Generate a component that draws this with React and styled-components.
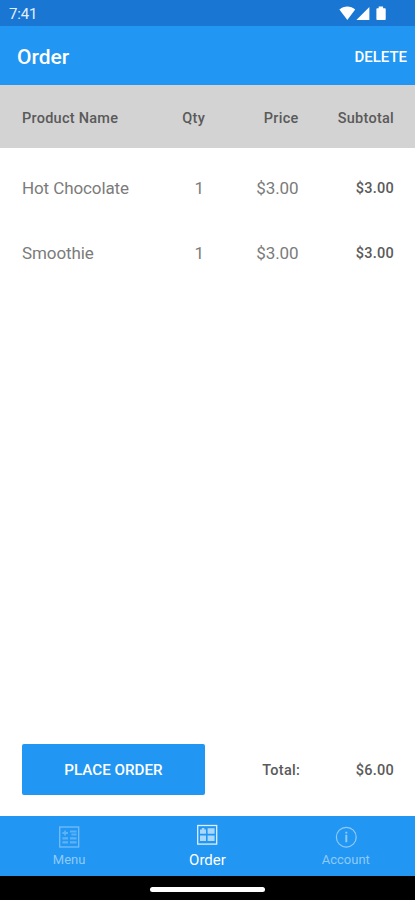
import React from 'react';
import styled, { createGlobalStyle } from 'styled-components';

const items = [
  { id: 1, name: 'Hot Chocolate', qty: 1, price: 3 },
  { id: 2, name: 'Smoothie', qty: 1, price: 3 },
];

const tabs = [
  { name: 'Menu', icon: 'list' },
  { name: 'Order', icon: 'list', active: true },
  { name: 'Account', icon: 'info' },
];

const formatPrice = (number) => `$${number.toFixed(2)}`;

const ListIcon = ({ active }) => (
  <svg width='22' height='22' viewBox='0 0 22 22' fill='none'>
    <rect
      x='1.7'
      y={active ? 1.5 : 1}
      width='19'
      height={active ? 18.6 : 20}
      stroke='currentColor'
      strokeWidth='1.3'
      strokeOpacity={active ? 0.85 : 0.75}
    />
    {active ? (
      <g fill='currentColor' fillOpacity='0.62'>
        <path d='M4 5.4h1.8V4h2.6v1.4H10v4.4H4zM11.6 4.2h7v5.6h-7zM4 11.4h6V17H4zM11.6 11.4h7V17h-7z' />
      </g>
    ) : (
      <g fill='currentColor' fillOpacity='0.55'>
        <path d='M4.4 6h1.8V4.6H8V6h2v2H8v1.4H6.200V8H4.400zM4.400 11.200H10v2.200H4.400zM4.400 15.200H10v2.400H4.400z' />
        <path d='M12 4.600h6.600v1.800H12zM13.400 7.400h5.200v2H13.400zM12 11.200h6.600v2.200H12zM12 15.200h6.600v2.400H12z' />
      </g>
    )}
  </svg>
);

const InfoIcon = () => (
  <svg width='22' height='22' viewBox='0 0 22 22' fill='none'>
    <circle cx='11.3' cy='11.2' r='9.9' stroke='currentColor' strokeWidth='1.2' />
    <path d='M11.3 5.8v1.8M11.3 8.8v7.4' stroke='currentColor' strokeWidth='1.9' />
  </svg>
);

const StatusIcons = () => (
  <svg width='48' height='16' viewBox='0 0 48 16' fill='#fff'>
    <path d='M0.4 3.6C4.8-0.6 11.8-0.6 16.2 3.6L8.3 14z' />
    <path d='M30.4 1v13H17.4z' />
    <path d='M39.7.6h4.4v1.6h1.8c.5 0 .8.3.8.8v10.2c0 .5-.3.8-.8.8h-7.700c-.5 0-.8-.3-.8-.8V3c0-.5.3-.8.8-.8h1.500z' />
  </svg>
);

const App = () => {
  const total = items.reduce((sum, item) => sum + item.qty * item.price, 0);

  return (
    <Screen>
      <GlobalStyle />
      <StatusBar>
        <span>7:41</span>
        <StatusIcons />
      </StatusBar>
      <Toolbar>
        <h1>Order</h1>
        <button>DELETE</button>
      </Toolbar>
      <TableHead>
        <Label>Product Name</Label>
        <Label>Qty</Label>
        <Label>Price</Label>
        <Label>Subtotal</Label>
      </TableHead>
      <Items>
        {items.map(({ id, name, qty, price }) => (
          <Row key={id}>
            <Cell>{name}</Cell>
            <Qty>{qty}</Qty>
            <Cell>{formatPrice(price)}</Cell>
            <Amount>{formatPrice(qty * price)}</Amount>
          </Row>
        ))}
      </Items>
      <Summary>
        <PlaceOrder>PLACE ORDER</PlaceOrder>
        <TotalLabel>Total:</TotalLabel>
        <Amount>{formatPrice(total)}</Amount>
      </Summary>
      <TabBar>
        {tabs.map(({ name, icon, active }) => (
          <Tab key={name} $active={active}>
            {icon === 'info' ? <InfoIcon /> : <ListIcon active={active} />}
            <span>{name}</span>
          </Tab>
        ))}
      </TabBar>
      <HomeBar>
        <span />
      </HomeBar>
    </Screen>
  );
};

const GlobalStyle = createGlobalStyle`
  * {
    box-sizing: border-box;
    margin: 0;
    padding: 0;
  }
  body {
    font-family: Roboto, sans-serif;
    background: #fff;
  }
  button {
    font-family: inherit;
    border: none;
    background: none;
    color: inherit;
  }
`;

const Screen = styled.main`
  display: flex;
  flex-direction: column;
  width: 415px;
  height: 900px;
  overflow: hidden;
`;

const StatusBar = styled.div`
  display: flex;
  align-items: center;
  justify-content: space-between;
  height: 26px;
  padding: 2px 28px 0 9px;
  background: #1976d2;
  color: #e3f0fc;
  font-size: 15px;
  letter-spacing: -0.2px;
  svg {
    margin-top: -1px;
  }
`;

const Toolbar = styled.header`
  display: flex;
  align-items: center;
  justify-content: space-between;
  height: 59px;
  padding: 2px 8px 0 17px;
  background: #2196f3;
  color: #fff;
  h1 {
    font-size: 21px;
    font-weight: 500;
  }
  button {
    font-size: 15px;
    font-weight: 500;
  }
`;

const Row = styled.div`
  display: grid;
  grid-template-columns: 123px 60px 93.5px 95.5px;
  align-items: center;
  height: 65px;
  padding: 0 21px 0 22px;
  white-space: nowrap;
  > :not(:first-child) {
    text-align: right;
  }
`;

const TableHead = styled(Row)`
  height: 63px;
  padding-top: 3px;
  background: #d3d3d3;
`;

const Items = styled.section`
  flex: 1;
  padding-top: 7px;
`;

const Label = styled.span`
  font-size: 14.5px;
  font-weight: 500;
  letter-spacing: 0.25px;
  color: #5a5a5a;
`;

const TotalLabel = styled(Label)`
  padding-top: 2px;
`;

const Cell = styled.span`
  font-size: 17px;
  letter-spacing: -0.1px;
  color: #7b7b7b;
`;

const Qty = styled(Cell)`
  padding-right: 1px;
`;

const Amount = styled(Label)`
  padding-top: 2px;
  text-align: right;
`;

const Summary = styled.section`
  display: grid;
  grid-template-columns: 183px 95px 94px;
  align-items: center;
  height: 72px;
  padding: 0 21px 21px 22px;
  > :not(:first-child) {
    text-align: right;
  }
`;

const PlaceOrder = styled.button`
  height: 51px;
  border-radius: 2px;
  background: #2196f3;
  color: #fff;
  font-size: 15.2px;
  font-weight: 500;
`;

const TabBar = styled.nav`
  display: grid;
  grid-template-columns: repeat(3, 1fr);
  height: 60px;
  background: #2196f3;
`;

const Tab = styled.div`
  display: flex;
  flex-direction: column;
  align-items: center;
  gap: ${({ $active }) => ($active ? '6px' : '4px')};
  padding-top: ${({ $active }) => ($active ? '8px' : '10px')};
  color: ${({ $active }) => ($active ? '#fff' : '#90caf9')};
  font-size: ${({ $active }) => ($active ? '15px' : '13px')};
  line-height: 16px;
`;

const HomeBar = styled.div`
  display: flex;
  justify-content: center;
  height: 24px;
  padding-top: 11px;
  background: #000;
  span {
    width: 115px;
    height: 5px;
    border-radius: 3px;
    background: #fff;
  }
`;

export default App;
